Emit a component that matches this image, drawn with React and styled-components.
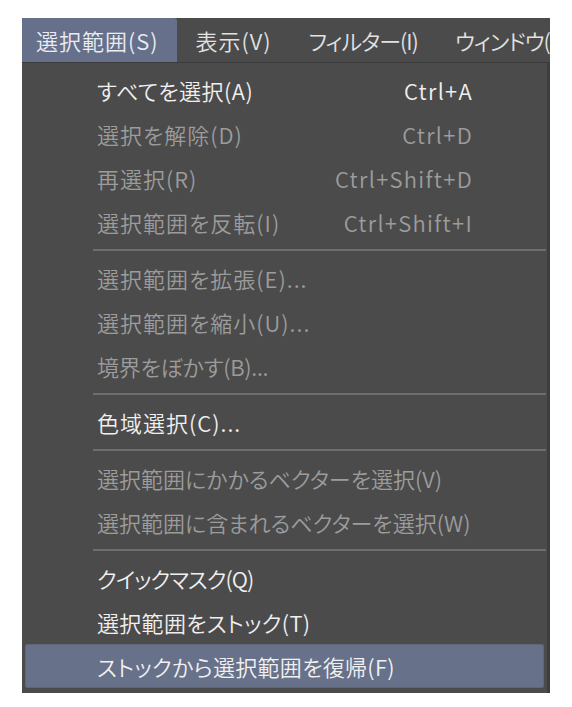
import React from 'react'
import styled, { createGlobalStyle } from 'styled-components'

const GlobalStyle = createGlobalStyle`
  html, body {
    margin: 0;
    padding: 0;
    background: #ffffff;
  }
  body {
    font-family: "Noto Sans CJK JP", "Noto Sans", sans-serif;
    font-feature-settings: "palt";
    font-weight: 350;
  }
`

const Page = styled.div`
  padding: 18px 0 0 22px;
  width: 572px;
  height: 707px;
  box-sizing: border-box;
`

const Window = styled.div`
  width: 528px;
  background-color: #4b4b4b;
  overflow: hidden;
`

const MenuBar = styled.div`
  display: flex;
  gap: 5px;
  height: 44px;
  border-bottom: 1px solid #3b3b3b;
  white-space: nowrap;
`

const MenuTitle = styled.div`
  display: flex;
  align-items: center;
  flex-shrink: 0;
  padding: 0 18px 0 14px;
  font-size: 22px;
  letter-spacing: ${props => props.spacing}px;
  color: ${props => props.active ? '#e9ecf3' : '#e2e2e2'};
  background-color: ${props => props.active ? '#66708a' : 'transparent'};
  border-radius: ${props => props.active ? '0 3px 0 0' : '0'};
`

const Dropdown = styled.div`
  padding: 5px 0 5px 3px;
  border-right: 3px solid #3e3e3e;
`

const Item = styled.div`
  display: flex;
  align-items: center;
  justify-content: space-between;
  height: 44px;
  margin-right: 3px;
  padding: 0 71px 0 72px;
  box-sizing: border-box;
  font-size: 22px;
  white-space: nowrap;
  color: ${props => props.disabled ? '#9c9c9c' : '#f0f0f0'};
  background-color: ${props => props.hover ? '#67718a' : 'transparent'};
  border-radius: ${props => props.hover ? '3px' : '0'};
  box-shadow: ${props => props.hover ? 'inset 0 0 0 1px #5d667c' : 'none'};
`

const Label = styled.span`
  letter-spacing: ${props => props.spacing}px;
`

const Shortcut = styled.span`
  letter-spacing: 1.3px;
`

const Separator = styled.div`
  height: 2px;
  margin: 5px 1px 5px 68px;
  background-color: #6e6e6e;
`

const menu = [
  { label: 'すべてを選択(A)', shortcut: 'Ctrl+A', spacing: 0.5 },
  { label: '選択を解除(D)', shortcut: 'Ctrl+D', disabled: true },
  { label: '再選択(R)', shortcut: 'Ctrl+Shift+D', disabled: true },
  { label: '選択範囲を反転(I)', shortcut: 'Ctrl+Shift+I', disabled: true },
  'sep',
  { label: '選択範囲を拡張(E)...', disabled: true },
  { label: '選択範囲を縮小(U)...', disabled: true },
  { label: '境界をぼかす(B)...', disabled: true, spacing: -0.3 },
  'sep',
  { label: '色域選択(C)...' },
  'sep',
  { label: '選択範囲にかかるベクターを選択(V)', disabled: true, spacing: 0 },
  { label: '選択範囲に含まれるベクターを選択(W)', disabled: true, spacing: 0 },
  'sep',
  { label: 'クイックマスク(Q)', spacing: -1 },
  { label: '選択範囲をストック(T)', spacing: 0.3 },
  { label: 'ストックから選択範囲を復帰(F)', hover: true, spacing: 0.3 }
]

const titles = [
  { label: '選択範囲(S)', spacing: 1 },
  { label: '表示(V)', spacing: 1 },
  { label: 'フィルター(I)', spacing: -1 },
  { label: 'ウィンドウ(W)', spacing: -1 }
]

export default function App () {
  return (
    <Page>
      <GlobalStyle />
      <Window>
        <MenuBar>
          {titles.map((t, i) => (
            <MenuTitle key={t.label} active={i === 0} spacing={t.spacing}>{t.label}</MenuTitle>
          ))}
        </MenuBar>
        <Dropdown>
          {menu.map((m, i) =>
            m === 'sep'
              ? <Separator key={i} />
              : (
                <Item key={i} disabled={m.disabled} hover={m.hover}>
                  <Label spacing={m.spacing ?? 1}>{m.label}</Label>
                  {m.shortcut && <Shortcut>{m.shortcut}</Shortcut>}
                </Item>
              )
          )}
        </Dropdown>
      </Window>
    </Page>
  )
}
